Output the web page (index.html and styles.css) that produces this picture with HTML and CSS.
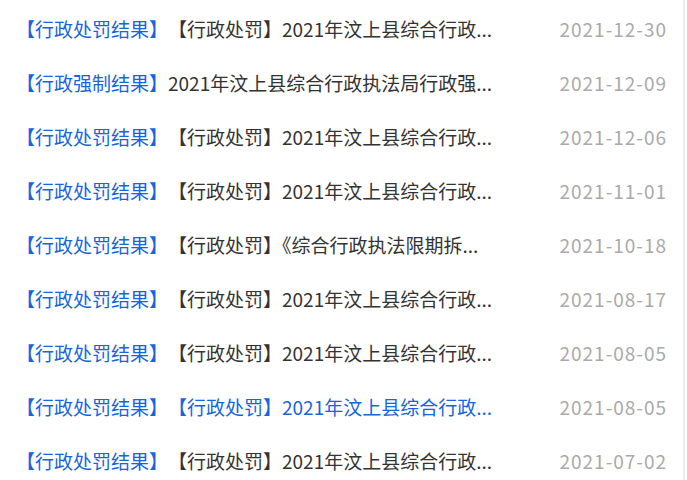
FILE: index.html
```html
<!DOCTYPE html>
<html lang="zh-CN">
<head>
    <meta charset="UTF-8">
    <meta name="viewport" content="width=device-width, initial-scale=1.0">
    <title>行政执法结果公示</title>
    <link rel="stylesheet" href="styles.css">
</head>
<body>
    <div class="panel">
        <ul class="news-list">
            <li><a href="#"><span class="tag">【行政处罚结果】</span><span class="title">【行政处罚】2021年汶上县综合行政...</span></a><span class="date">2021-12-30</span></li>
            <li><a href="#"><span class="tag">【行政强制结果】</span><span class="title">2021年汶上县综合行政执法局行政强...</span></a><span class="date">2021-12-09</span></li>
            <li><a href="#"><span class="tag">【行政处罚结果】</span><span class="title">【行政处罚】2021年汶上县综合行政...</span></a><span class="date">2021-12-06</span></li>
            <li><a href="#"><span class="tag">【行政处罚结果】</span><span class="title">【行政处罚】2021年汶上县综合行政...</span></a><span class="date">2021-11-01</span></li>
            <li><a href="#"><span class="tag">【行政处罚结果】</span><span class="title">【行政处罚】《综合行政执法限期拆...</span></a><span class="date">2021-10-18</span></li>
            <li><a href="#"><span class="tag">【行政处罚结果】</span><span class="title">【行政处罚】2021年汶上县综合行政...</span></a><span class="date">2021-08-17</span></li>
            <li><a href="#"><span class="tag">【行政处罚结果】</span><span class="title">【行政处罚】2021年汶上县综合行政...</span></a><span class="date">2021-08-05</span></li>
            <li class="active"><a href="#"><span class="tag">【行政处罚结果】</span><span class="title">【行政处罚】2021年汶上县综合行政...</span></a><span class="date">2021-08-05</span></li>
            <li><a href="#"><span class="tag">【行政处罚结果】</span><span class="title">【行政处罚】2021年汶上县综合行政...</span></a><span class="date">2021-07-02</span></li>
        </ul>
    </div>
</body>
</html>
```

FILE: styles.css
```css
body {
    margin: 0;
    padding: 0;
    background: #fff;
    font-family: "Microsoft YaHei", "Noto Sans CJK SC", sans-serif;
}
.panel {
    width: 683px;
    height: 480px;
    border-right: 2px solid #ececec;
    overflow: hidden;
}
.news-list {
    list-style: none;
    margin: 0;
    padding: 1px 0 0 0;
}
.news-list li {
    display: flex;
    align-items: center;
    height: 54px;
    padding: 0 17px 0 16px;
    font-size: 19px;
}
.news-list a {
    display: flex;
    text-decoration: none;
    color: #333;
    min-width: 0;
}
.tag {
    color: #1565e0;
    white-space: nowrap;
}
.title {
    white-space: nowrap;
}
.news-list li.active .title {
    color: #1565e0;
}
.date {
    margin-left: auto;
    color: #aaa;
    letter-spacing: 1px;
    margin-right: -1px;
    white-space: nowrap;
}
```
